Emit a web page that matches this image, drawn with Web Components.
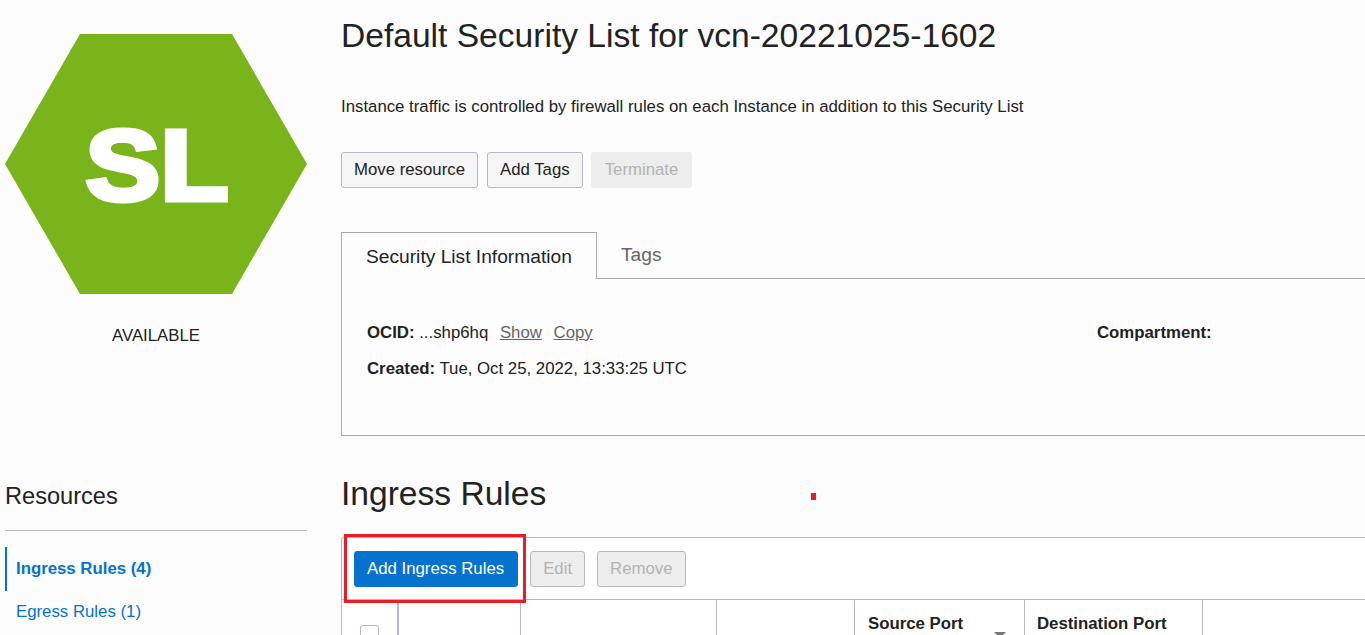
<!DOCTYPE html>
<html>
<head>
<meta charset="utf-8">
<title>Default Security List</title>
<style>
html, body { margin: 0; height: 635px; overflow: hidden; background: #fcfcfc; }
body { font-family: "Liberation Sans", Arial, sans-serif; color: #222; }
</style>
</head>
<body>
<sl-page></sl-page>
<script>
class SlButton extends HTMLElement {
  constructor() {
    super();
    const shadow = this.attachShadow({mode: 'open'});
    shadow.innerHTML = `
<style>
:host { display: inline-flex; box-sizing: border-box; height: 36px; align-items: center; padding: 0 12px; font-size: 16.8px; border: 1px solid #b5b9c4; border-radius: 3px; background: #f5f5f6; color: #222; white-space: nowrap; }
:host([kind="primary"]) { background: #0572ce; border-color: #0572ce; color: #fff; padding-right: 13px; }
:host([kind="off"]) { background: #ededed; color: #b3b3b3; }
:host([kind="off-plain"]) { background: #ededed; border-color: #ededed; color: #b3b3b3; margin-left: -1px; padding: 0 13px; }
</style>
<slot></slot>`;
  }
}
customElements.define('sl-button', SlButton);

class SlBadge extends HTMLElement {
  constructor() {
    super();
    const shadow = this.attachShadow({mode: 'open'});
    shadow.innerHTML = `
<style>
:host { display: flex; flex-direction: column; align-items: center; width: 302px; }
svg { display: block; }
.state { margin-top: 33px; font-size: 16.8px; line-height: 18px; color: #222; }
</style>
<svg width="302" height="260" viewBox="0 0 302 260">
  <polygon points="0,130 75,0 227,0 302,130 227,260 75,260" fill="#78b41a"/>
  <text transform="translate(152 166) scale(1.12 1)" text-anchor="middle" font-family="Liberation Sans, Arial, sans-serif" font-weight="700" font-size="100" fill="#fff" stroke="#fff" stroke-width="5" stroke-linejoin="miter">SL</text>
</svg>
<div class="state"><slot></slot></div>`;
  }
}
customElements.define('sl-badge', SlBadge);

class SlSideNav extends HTMLElement {
  constructor() {
    super();
    const shadow = this.attachShadow({mode: 'open'});
    shadow.innerHTML = `
<style>
:host { display: block; width: 302px; }
h2 { margin: 0; padding-bottom: 20px; font-size: 23.6px; font-weight: 400; line-height: 28px; border-bottom: 1px solid #b5b9c4; color: #222; }
ul { list-style: none; margin: 16px 0 0; padding: 0; font-size: 16.8px; color: #0572ce; }
li { height: 42px; line-height: 41px; padding-left: 11px; }
li.on { height: 44px; line-height: 43px; font-weight: 700; border-left: 2px solid #0572ce; padding-left: 9px; }
</style>
<h2>Resources</h2>
<ul>
  <li class="on">Ingress Rules (4)</li>
  <li>Egress Rules (1)</li>
</ul>`;
  }
}
customElements.define('sl-side-nav', SlSideNav);

class SlInfoTabs extends HTMLElement {
  constructor() {
    super();
    const shadow = this.attachShadow({mode: 'open'});
    shadow.innerHTML = `
<style>
:host { display: block; font-size: 16.8px; color: #222; }
.tabs { display: flex; height: 47px; box-sizing: border-box; border-bottom: 1px solid #aaa; font-size: 19.2px; }
.tab { box-sizing: border-box; height: 47px; width: 256px; border: 1px solid #aaa; border-bottom: 0; background: #fdfdfd; padding: 13px 0 0 24px; line-height: 21px; }
.other { padding: 12px 0 0 24px; line-height: 21px; color: #666; }
.panel { box-sizing: border-box; height: 157px; border: 1px solid #aaa; border-top: 0; border-right: 0; padding: 45px 25px 0; display: flex; background: #fdfdfd; }
.col { line-height: 18px; }
.col.left { width: 730px; }
.row { margin-bottom: 18px; }
a { color: #666; text-decoration: underline; margin-left: 7px; }
</style>
<div class="tabs"><div class="tab">Security List Information</div><div class="other">Tags</div></div>
<div class="panel">
  <div class="col left">
    <div class="row"><b>OCID:</b> ...shp6hq <a>Show</a> <a>Copy</a></div>
    <div class="row"><b>Created:</b> Tue, Oct 25, 2022, 13:33:25 UTC</div>
  </div>
  <div class="col"><b>Compartment:</b></div>
</div>`;
  }
}
customElements.define('sl-info-tabs', SlInfoTabs);

class SlRulesTable extends HTMLElement {
  constructor() {
    super();
    const shadow = this.attachShadow({mode: 'open'});
    shadow.innerHTML = `
<style>
:host { display: block; position: relative; font-size: 16.8px; color: #222; background: #fff; border: 1px solid #b5b9c4; border-right: 0; border-radius: 3px 0 0 0; height: 140px; box-sizing: border-box; }
.bar { box-sizing: border-box; height: 62px; padding-top: 13px; display: flex; gap: 12px; padding-left: 12px; border-bottom: 1px solid #b5b9c4; }
.head { display: grid; grid-template-columns: 57px 122px 196px 138px 170px 178px 1fr; height: 80px; }
.head > div { border-right: 1px solid #b5b9c4; box-sizing: border-box; padding: 15px 0 0 12px; font-weight: 700; line-height: 18px; position: relative; }
.head > div:first-child { border-right-width: 2px; padding: 0; }
.head > div:last-child { border-right: 0; }
.head > div.src { padding-left: 13px; }
.check { position: absolute; left: 18px; top: 25px; width: 19px; height: 19px; box-sizing: border-box; border: 1px solid #b5b9c4; border-radius: 3px; background: #fff; }
.sort { position: absolute; right: 18px; top: 32px; width: 0; height: 0; border-left: 6px solid transparent; border-right: 6px solid transparent; border-top: 6px solid #777; }
</style>
<div class="bar"><slot></slot></div>
<div class="head">
  <div><span class="check"></span></div><div></div><div></div><div></div>
  <div class="src">Source Port<span class="sort"></span></div>
  <div>Destination Port</div>
  <div></div>
</div>`;
  }
}
customElements.define('sl-rules-table', SlRulesTable);

class SlPage extends HTMLElement {
  constructor() {
    super();
    const shadow = this.attachShadow({mode: 'open'});
    shadow.innerHTML = `
<style>
:host { display: grid; grid-template-columns: 302px 1fr; column-gap: 34px; padding-left: 5px; height: 635px; overflow: hidden; position: relative; }
.left { display: flex; flex-direction: column; padding-top: 34px; }
sl-side-nav { margin-top: 137px; }
.main { padding-top: 14px; min-width: 0; }
h1 { margin: 0; font-size: 33.6px; font-weight: 400; line-height: 44px; color: #222; }
p { margin: 39px 0 0; font-size: 16.8px; line-height: 20px; }
.actions { display: flex; gap: 9px; margin-top: 35px; }
sl-info-tabs { margin-top: 44px; }
h2 { margin: 0; padding-top: 35px; font-size: 33.6px; font-weight: 400; line-height: 46px; color: #222; }
sl-rules-table { margin-top: 20px; }
.mark { position: absolute; left: 344px; top: 534px; width: 182px; height: 69px; box-sizing: border-box; border: 3px solid #ed1c24; }
.dot { position: absolute; left: 811px; top: 493px; width: 5px; height: 7px; background: #ed1c24; }
</style>
<div class="left">
  <sl-badge>AVAILABLE</sl-badge>
  <sl-side-nav></sl-side-nav>
</div>
<div class="main">
  <h1>Default Security List for vcn-20221025-1602</h1>
  <p>Instance traffic is controlled by firewall rules on each Instance in addition to this Security List</p>
  <div class="actions">
    <sl-button>Move resource</sl-button>
    <sl-button>Add Tags</sl-button>
    <sl-button kind="off-plain">Terminate</sl-button>
  </div>
  <sl-info-tabs></sl-info-tabs>
  <h2>Ingress Rules</h2>
  <sl-rules-table>
    <sl-button kind="primary">Add Ingress Rules</sl-button>
    <sl-button kind="off">Edit</sl-button>
    <sl-button kind="off">Remove</sl-button>
  </sl-rules-table>
</div>
<div class="mark"></div>
<div class="dot"></div>`;
  }
}
customElements.define('sl-page', SlPage);
</script>
</body>
</html>
